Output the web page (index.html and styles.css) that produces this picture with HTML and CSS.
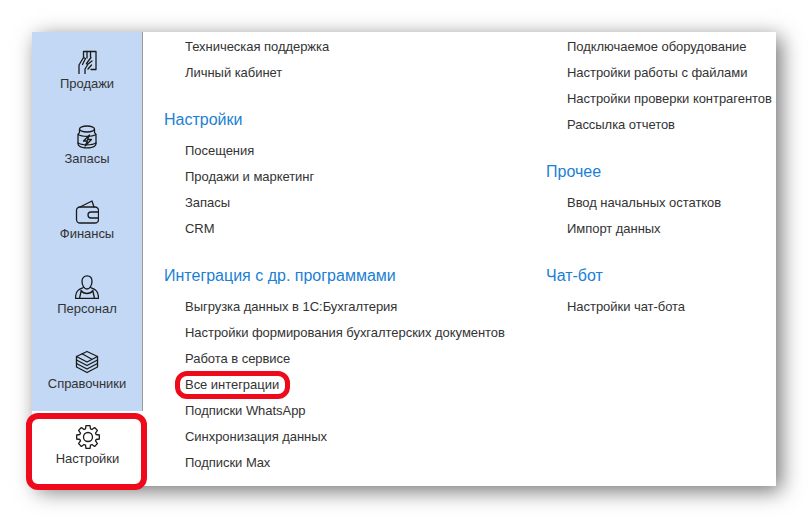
FILE: index.html
```html
<!DOCTYPE html>
<html lang="ru">
<head>
<meta charset="utf-8">
<title>Настройки</title>
<link rel="stylesheet" href="styles.css">
</head>
<body>
<div class="panel">
  <nav class="sidebar">
    <a class="nav-item">
      <svg class="icon" viewBox="0 0 24 24"><path d="M8.500 7V1.500h12.500V19.500h-5"/><path d="M12 1.500V8M15.500 1.500V7"/><path d="M4 23.500V15l4.500-7.500 2 1-3 6M16 7.500l-4.500 6 1 1.500-2.500 4v4.500M17 11l-4.500 3.500M16.500 15l-3.500 4"/></svg>
      <span>Продажи</span>
    </a>
    <a class="nav-item">
      <svg class="icon" viewBox="0 0 24 24"><ellipse cx="12" cy="4" rx="7.500" ry="3"/><path d="M4.500 4.500V7.500C3.300 8.500 3 9.500 3 11v7.500c0 1.500.5 2 1.500 2.800 3 2.200 12 2.200 15 0 1-.8 1.500-1.300 1.500-2.800V11c0-1.500-.3-2.500-1.500-3.500V4.500"/><path d="M3 9.500c4 2.500 14 2.500 18 0M3 18c4 2.500 14 2.500 18 0"/><path d="M14.500 10 8.500 16h4L10 21l6.500-6.500H12.500z"/></svg>
      <span>Запасы</span>
    </a>
    <a class="nav-item">
      <svg class="icon" viewBox="0 0 24 24"><rect x="1.500" y="7" width="22" height="16" rx="3.500"/><path d="M5 7 17 1l2 6"/><path d="M23.500 12H16a3 3 0 0 0 0 6h7.500"/></svg>
      <span>Финансы</span>
    </a>
    <a class="nav-item">
      <svg class="icon" viewBox="0 0 24 24"><path d="M12 .8c3 0 5 2.200 5 5.500 0 3.500-2 7.700-5 7.700s-5-4.200-5-7.700C7 3 9 .8 12 .8z"/><path d="M.5 23.500h23c0-4-1-7-3-8.500-1.500-1.200-3.500-1.800-5-2.500M.5 23.500c0-4 1-7 3-8.500 1.500-1.200 3.500-1.800 5-2.500"/><path d="M6 15.500c3 4 9 4 12 0M6 16.500 4.500 23.500M18 16.500l1.500 7"/></svg>
      <span>Персонал</span>
    </a>
    <a class="nav-item">
      <svg class="icon" viewBox="0 0 24 24"><path d="M12 1.500 22.500 6.500 12 12 1.500 6.500z"/><path d="M7 3.800 16.500 9M1.500 6.500v3.500L12 15.500 22.500 10V6.500"/><path d="M1.500 10v3.500L12 19l10.500-5.500V10"/><path d="M1.500 13.500V17L12 22.500 22.500 17v-3.500"/></svg>
      <span>Справочники</span>
    </a>
    <a class="nav-item nav-item-active">
      <svg class="icon" viewBox="0 0 24 24"><polygon points="9.510,3.870 10,.67 14,.67 14.490,3.870 15.990,4.490 18.600,2.580 21.420,5.400 19.510,8.010 20.130,9.510 23.330,10 23.330,14 20.130,14.490 19.510,15.990 21.420,18.600 18.600,21.420 15.990,19.510 14.490,20.130 14,23.330 10,23.330 9.510,20.130 8.010,19.510 5.400,21.420 2.580,18.600 4.490,15.990 3.870,14.490 .67,14 .67,10 3.870,9.510 4.490,8.010 2.580,5.400 5.400,2.580 8.010,4.490"/><circle cx="12" cy="12" r="4.500"/></svg>
      <span>Настройки</span>
    </a>
    <div class="highlight highlight-nav"></div>
  </nav>
  <main class="content">
    <section class="column column-left">
      <ul class="links">
        <li>Техническая поддержка</li>
        <li>Личный кабинет</li>
      </ul>
      <h2>Настройки</h2>
      <ul class="links">
        <li>Посещения</li>
        <li>Продажи и маркетинг</li>
        <li>Запасы</li>
        <li>CRM</li>
      </ul>
      <h2>Интеграция с др. программами</h2>
      <ul class="links">
        <li>Выгрузка данных в 1С:Бухгалтерия</li>
        <li>Настройки формирования бухгалтерских документов</li>
        <li>Работа в сервисе</li>
        <li class="marked">Все интеграции<span class="highlight highlight-link"></span></li>
        <li>Подписки WhatsApp</li>
        <li>Синхронизация данных</li>
        <li>Подписки Max</li>
      </ul>
    </section>
    <section class="column">
      <ul class="links">
        <li>Подключаемое оборудование</li>
        <li>Настройки работы с файлами</li>
        <li>Настройки проверки контрагентов</li>
        <li>Рассылка отчетов</li>
      </ul>
      <h2>Прочее</h2>
      <ul class="links">
        <li>Ввод начальных остатков</li>
        <li>Импорт данных</li>
      </ul>
      <h2>Чат-бот</h2>
      <ul class="links">
        <li>Настройки чат-бота</li>
      </ul>
    </section>
  </main>
</div>
</body>
</html>
```
FILE: styles.css
```css
* { box-sizing: border-box; }
html, body { margin: 0; height: 100%; }
body {
  background: #fff;
  padding: 32px;
  font-family: "Liberation Sans", Arial, sans-serif;
  overflow: hidden;
}
.panel {
  display: flex;
  width: 744px;
  height: 454px;
  background: #fff;
  box-shadow: 5px 5px 20px rgba(0, 0, 0, .55);
}
.sidebar {
  position: relative;
  flex: none;
  display: flex;
  flex-direction: column;
  width: 111px;
  padding-top: 4px;
  background: #c2d8f5;
  border-right: 1px solid #999;
}
.nav-item {
  display: flex;
  flex-direction: column;
  align-items: center;
  height: 75px;
  padding-top: 14px;
  color: #333;
  font-size: 13px;
  line-height: 15px;
  letter-spacing: -.03px;
}
.nav-item-active { background: #fff; margin-right: -1px; }
.icon {
  display: block;
  width: 24px;
  height: 24px;
  margin-bottom: 2px;
  fill: none;
  stroke: #1a1a1a;
  stroke-width: 1.300;
  stroke-linejoin: round;
  stroke-linecap: round;
}
.content {
  display: flex;
  flex: 1;
  padding-left: 21px;
  color: #333;
}
.column { flex: none; }
.column-left { width: 382px; }
.links {
  list-style: none;
  margin: 0;
  padding: 2px 0 0 21px;
  font-size: 13px;
  letter-spacing: -.04px;
}
.links li {
  height: 26px;
  line-height: 26px;
  white-space: nowrap;
}
h2 {
  height: 21px;
  margin: 24px 0 5px;
  font-size: 16px;
  line-height: 20px;
  font-weight: 400;
  color: #1b7fd4;
}
.marked { position: relative; }
.highlight {
  position: absolute;
  border: 5px solid #ee0a1a;
  border-radius: 12px;
  pointer-events: none;
}
.highlight-nav {
  left: -6px;
  bottom: -4px;
  width: 121px;
  height: 77px;
  border-width: 6px;
}
.highlight-link {
  left: -10px;
  top: -1px;
  width: 115px;
  height: 28px;
}
```
